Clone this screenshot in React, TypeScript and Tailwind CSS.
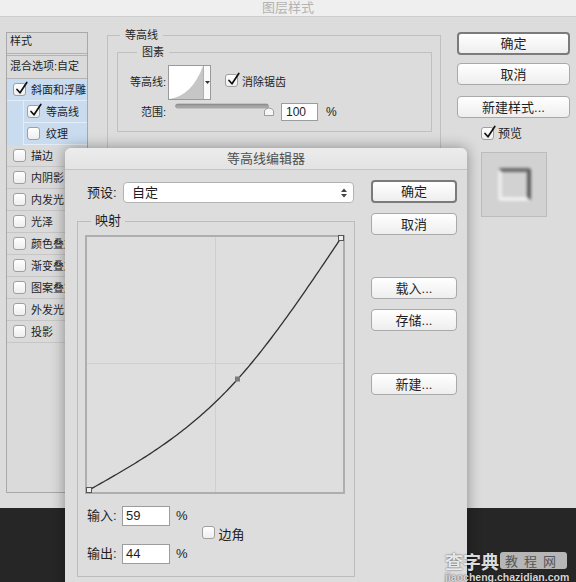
import React from "react";

const Check = ({ checked }: { checked?: boolean }) => (
  <span className="relative inline-block w-[13px] h-[13px] shrink-0 rounded-[3px] border border-[#9f9f9f] bg-linear-to-b from-white to-[#eeeeee]">
    {checked && (
      <svg className="absolute left-[1px] top-[-3px] overflow-visible" width="13" height="14" viewBox="0 0 13 14">
        <path d="M2 8.5 L5 11.8 L11.8 1.5" fill="none" stroke="#111" strokeWidth="1.7" strokeLinecap="round" strokeLinejoin="round" />
      </svg>
    )}
  </span>
);

const Btn = ({ children, def, className = "" }: { children: React.ReactNode; def?: boolean; className?: string }) => (
  <div
    className={
      (def
        ? "h-[23px] border-2 border-[#7b7b7b] "
        : "h-[22px] border border-[#a9a9a9] ") +
      "flex items-center justify-center rounded-[4px] bg-linear-to-b from-white to-[#eeeeee] text-[13px] leading-none text-[#1f1f1f] " +
      className
    }
  >
    {children}
  </div>
);

function curvePath() {
  const pts: string[] = [];
  const ox = 4, oy = 255, w = 252, h = 252;
  for (let i = 0; i <= 120; i++) {
    const x = i / 120;
    let y: number;
    if (x <= 0.59) y = 0.5255 * x ** 3 + 0.5629 * x;
    else {
      const t = 1 - x;
      y = 0.7562 * t ** 3 + 0.9461 * t + 2.439 * (x - 0.59);
    }
    pts.push(`${(ox + x * w).toFixed(2)},${(oy - y * h).toFixed(2)}`);
  }
  return "M" + pts.join(" L");
}

const sideItems = ["描边", "内阴影", "内发光", "光泽", "颜色叠加", "渐变叠加", "图案叠加", "外发光", "投影"];

export default function App() {
  return (
    <div className="relative w-[576px] h-[582px] overflow-hidden bg-[#262626] font-['Liberation_Sans','Noto_Sans_CJK_SC',sans-serif] text-[#1e1e1e]">
      {/* Outer dialog: 图层样式 */}
      <div className="h-[508px] bg-[#dcdcdc] flex flex-col">
        <div className="h-[17px] shrink-0 bg-[#efefef] border-b border-[#cdcdcd] text-center text-[13px] leading-[16px] text-[#b3b3b3]">
          图层样式
        </div>
        <div className="flex items-start pl-[6px]">
          {/* Sidebar */}
          <div className="mt-[15px] w-[82px] h-[461px] border border-[#a8a8a8] bg-[#dadada] text-[11px] leading-[14px] flex flex-col">
            <div className="h-[23px] pl-[3px] pb-[4px] flex items-center border-b-[3px] border-double border-[#b3b3b3]">样式</div>
            <div className="h-[23px] pl-[3px] pb-[2px] flex items-center border-b border-[#b3b3b3]">混合选项:自定</div>
            <div className="bg-[#c9dbef]">
              <div className="h-[22px] pl-[6px] flex items-center gap-[5px] border-b border-[#e4edf7]">
                <Check checked />
                <span>斜面和浮雕</span>
              </div>
              <div className="ml-[16px] h-[22px] pl-[3px] flex items-center gap-[6px] border-l border-b border-[#e4edf7]">
                <Check checked />
                <span>等高线</span>
              </div>
              <div className="ml-[16px] h-[22px] pl-[3px] flex items-center gap-[6px] border-l border-b border-[#e4edf7]">
                <Check />
                <span>纹理</span>
              </div>
            </div>
            {sideItems.map((s) => (
              <div key={s} className="h-[22px] pl-[6px] flex items-center gap-[5px] border-b border-[#c6c6c6] whitespace-nowrap">
                <Check />
                <span>{s}</span>
              </div>
            ))}
          </div>

          {/* Main settings */}
          <div className="ml-[19px] mt-[11px] w-[334px]">
            <fieldset className="w-[334px] h-[240px] border border-[#c0c0c0]">
              <legend className="ml-[12px] px-[5px] text-[11px] leading-[14px]">等高线</legend>
              <fieldset className="ml-[9px] mt-[3px] w-[315px] border border-[#c0c0c0] pl-[8px] pb-[10px]">
                <legend className="ml-[11px] px-[5px] text-[11px] leading-[14px]">图素</legend>
                <div className="mt-[6px] h-[35px] flex items-center text-[11px]">
                  <span className="w-[40px] text-right">等高线:</span>
                  <div className="ml-[2px] w-[43px] h-[35px] flex border border-[#9a9a9a] bg-white">
                    <svg width="34" height="33" viewBox="0 0 34 33">
                      <path d="M0 33 Q23 30 34 0 L34 33 Z" fill="#c6c6c6" />
                    </svg>
                    <div className="flex-1 border-l border-[#b0b0b0] flex items-center justify-center bg-[#fafafa]">
                      <svg width="5" height="4" viewBox="0 0 5 4">
                        <path d="M0 0 L5 0 L2.5 3 Z" fill="#333" />
                      </svg>
                    </div>
                  </div>
                  <span className="ml-[14px]"><Check checked /></span>
                  <span className="ml-[4px]">消除锯齿</span>
                </div>
                <div className="mt-[3px] h-[18px] flex items-center text-[11px]">
                  <span className="w-[40px] text-right">范围:</span>
                  <svg className="ml-[9px] mt-[-4px]" width="100" height="14" viewBox="0 0 100 14">
                    <defs>
                      <linearGradient id="trk" x1="0" y1="0" x2="0" y2="1">
                        <stop offset="0" stopColor="#8c8c8c" />
                        <stop offset="1" stopColor="#b8b8b8" />
                      </linearGradient>
                    </defs>
                    <rect x="0.5" y="1" width="93" height="4" rx="2" fill="url(#trk)" stroke="#8a8a8a" strokeWidth="0.6" />
                    <path d="M89.5 12.5 L89.5 7.5 Q94 2.5 98.5 7.5 L98.5 12.5 Z" fill="#f6f6f6" stroke="#8a8a8a" strokeWidth="0.8" />
                  </svg>
                  <div className="ml-[6px] w-[37px] h-[18px] border border-[#9c9c9c] bg-white text-[12px] leading-[16px] pl-[4px]">100</div>
                  <span className="ml-[8px] text-[12px]">%</span>
                </div>
              </fieldset>
            </fieldset>
          </div>

          {/* Right buttons */}
          <div className="ml-[16px] mt-[15px] w-[113px] flex flex-col">
            <Btn def>确定</Btn>
            <Btn className="mt-[8px]">取消</Btn>
            <Btn className="mt-[11px]">新建样式...</Btn>
            <div className="mt-[9px] ml-[24px] h-[13px] flex items-center text-[12px]">
              <Check checked />
              <span className="ml-[4px]">预览</span>
            </div>
            <div className="mt-[12px] ml-[24px] w-[66px] h-[65px] border border-[#bcbcbc] bg-[#d2d2d2] flex items-center justify-center">
              <div className="w-[33px] h-[33px] rounded-[3px] border-[4px] border-t-[#696969] border-r-[#5c5c5c] border-l-[#ececec] border-b-[#efefef] blur-[1.5px]" />
            </div>
          </div>
        </div>
      </div>

      {/* Modal: 等高线编辑器 */}
      <div className="absolute left-[65px] top-[148px] w-[402px] h-[440px] rounded-t-[6px] bg-[#dddddd] shadow-[0_0_14px_rgba(0,0,0,0.38)] flex flex-col">
        <div className="h-[22px] shrink-0 rounded-t-[6px] bg-linear-to-b from-[#ececec] to-[#e3e3e3] border-b border-[#c4c4c4] text-center text-[13px] leading-[21px] text-[#4f4f4f]">
          等高线编辑器
        </div>
        <div className="flex items-start pt-[10px] text-[13px]">
          <div className="w-[290px] pl-[12px]">
            <div className="mt-[2px] h-[21px] flex items-center">
              <span className="ml-[10px] w-[33px]">预设:</span>
              <div className="ml-[3px] w-[231px] h-[21px] rounded-[4px] border border-[#b3b3b3] bg-white flex items-center pl-[8px] pr-[6px]">
                <span className="flex-1">自定</span>
                <svg width="6" height="10" viewBox="0 0 6 10">
                  <path d="M0 4 L3 0.5 L6 4 Z M0 6 L3 9.5 L6 6 Z" fill="#444" />
                </svg>
              </div>
            </div>
            <fieldset className="mt-[11px] w-[278px] border border-[#bcbcbc] pb-[12px]">
              <legend className="ml-[13px] px-[4px] leading-[14px]">映射</legend>
              <svg className="ml-[7px] mt-[7px] block" width="260" height="259" viewBox="0 0 260 259">
                <rect x="1" y="1" width="258" height="257" fill="#dedede" stroke="#aeaeae" strokeWidth="2" />
                <line x1="130.5" y1="2" x2="130.5" y2="257" stroke="#cfcfcf" strokeWidth="1" />
                <line x1="2" y1="128.5" x2="258" y2="128.5" stroke="#cfcfcf" strokeWidth="1" />
                <path d={curvePath()} fill="none" stroke="#303030" strokeWidth="1.3" />
                <rect x="1.5" y="252.5" width="5" height="5" fill="#eeeeee" stroke="#555" strokeWidth="1" />
                <rect x="253.5" y="0.5" width="5" height="5" fill="#eeeeee" stroke="#555" strokeWidth="1" />
                <rect x="150" y="141.5" width="5" height="5" fill="#7a7a7a" />
              </svg>
              <div className="mt-[12px] ml-[9px] flex items-center">
                <div className="flex flex-col gap-[18px]">
                  <div className="h-[20px] flex items-center">
                    <span className="w-[33px]">输入:</span>
                    <div className="ml-[2px] w-[48px] h-[20px] border border-[#9c9c9c] bg-white pl-[3px] leading-[18px]">59</div>
                    <span className="ml-[6px]">%</span>
                  </div>
                  <div className="h-[20px] flex items-center">
                    <span className="w-[33px]">输出:</span>
                    <div className="ml-[2px] w-[48px] h-[20px] border border-[#9c9c9c] bg-white pl-[3px] leading-[18px]">44</div>
                    <span className="ml-[6px]">%</span>
                  </div>
                </div>
                <span className="ml-[14px]"><Check /></span>
                <span className="ml-[4px]">边角</span>
              </div>
            </fieldset>
          </div>
          <div className="ml-[16px] w-[86px] flex flex-col">
            <Btn def>确定</Btn>
            <Btn className="mt-[10px]">取消</Btn>
            <Btn className="mt-[42px]">载入...</Btn>
            <Btn className="mt-[10px]">存储...</Btn>
            <Btn className="mt-[42px]">新建...</Btn>
          </div>
        </div>
      </div>

      {/* Watermark */}
      <div className="absolute left-[445px] top-[551px] flex flex-col [text-shadow:0_0_2px_rgba(0,0,0,0.7)]">
        <div className="h-[19px] flex items-center">
          <span className="text-[18px] leading-[18px] font-bold text-white/85 font-['Noto_Sans_CJK_SC',sans-serif]">查字典</span>
          <span className="ml-[1px] w-[67px] h-[17px] rounded-[3px] bg-[#d0d0d0]/85 text-[13px] leading-[17px] text-center tracking-[6px] text-[#555] [text-shadow:none] font-['Noto_Sans_CJK_SC',sans-serif]">教程网</span>
        </div>
        <span className="mt-[2px] text-[10.5px] leading-[10px] font-bold text-[#d6d6d6]">jiaocheng.chazidian.com</span>
      </div>
    </div>
  );
}
